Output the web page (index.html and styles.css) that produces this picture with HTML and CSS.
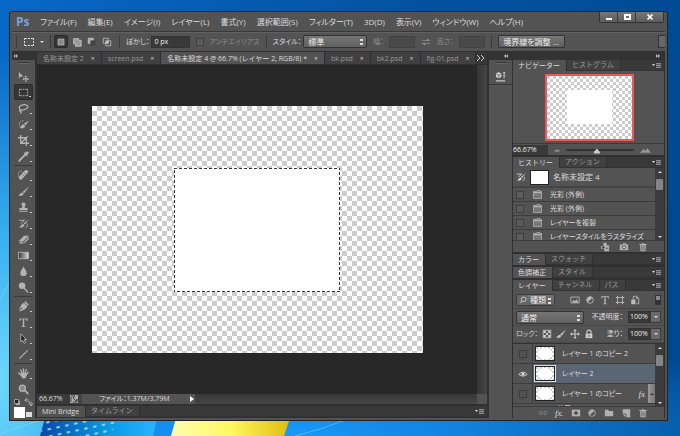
FILE: index.html
```html
<!DOCTYPE html>
<html lang="ja">
<head>
<meta charset="utf-8">
<title>名称未設定 4</title>
<link rel="stylesheet" href="styles.css">
</head>
<body>
<svg class="wallpaper" viewBox="0 0 680 436" preserveAspectRatio="none" aria-hidden="true">
  <defs>
    <linearGradient id="flagBlue" x1="0" x2="1"><stop offset="0" stop-color="#0848a8"/><stop offset=".55" stop-color="#0898e0"/><stop offset="1" stop-color="#28b4ff"/></linearGradient>
    <linearGradient id="flagYellow" x1="0" x2="1"><stop offset="0" stop-color="#fffcb0"/><stop offset=".5" stop-color="#fff860"/><stop offset="1" stop-color="#e0bc10"/></linearGradient>
    <pattern id="dots" width="9" height="7" patternUnits="userSpaceOnUse" patternTransform="rotate(-12)"><ellipse cx="4" cy="3" rx="2" ry="1" fill="#a8dcff"/></pattern>
  </defs>
  <path d="M0 300 10 282M0 434Q20 426 42 420M295 436Q320 430 345 420" stroke="#8ed8ff" fill="none" opacity=".5"/>
  <path d="M45 418H157L153 436H40Z" fill="url(#flagBlue)"/>
  <path d="M45 418H122L108 436H40Z" fill="url(#dots)"/>
  <path d="M176 418H290L284 436H171Z" fill="url(#flagYellow)"/>
</svg>
<svg class="defs" aria-hidden="true">
  <symbol id="move" viewBox="0 0 12 12"><path d="M1 1v7l2-2h3z"/><path d="M8.500 4.500 10 6.500H9v1.500h1.500V7l1.500 1.700-1.500 1.600v-1H9V11h1l-1.500 1L7 11h1V9.300H6.500v1L5 8.700 6.500 7v1H8V6.500H7z"/></symbol>
  <symbol id="marquee" viewBox="0 0 12 12"><path d="M1.500 4V2.500H4M5 2.500h2M8 2.500h2.500V4M10.500 5v2M10.500 8v1.500H8M7 9.500H5M4 9.500H1.500V8M1.500 7V5" fill="none" stroke="currentColor"/></symbol>
  <symbol id="lasso" viewBox="0 0 12 12"><path d="M3 7.500C-.5 5.500 2 2 6.500 1.800 11 1.600 12 4.500 9 6.200 7 7.400 4 7.800 3 7.500c-1.500 0-1.500 2 0 1.800 1 0 .5 1.500-.5 2.200" fill="none" stroke="currentColor" stroke-width="1.300"/></symbol>
  <symbol id="quick" viewBox="0 0 12 12"><path d="M6 2C2 2 0 5 2 8" fill="none" stroke="currentColor" stroke-dasharray="1.500 1"/><path d="M11.800 1.500 8.500 6.800 6.300 5.300zM5.800 5.800 8 7.500C7.500 10 4 10.800 1.500 9.500c2 0 2-3.500 4.300-3.700z"/></symbol>
  <symbol id="crop" viewBox="0 0 12 12"><path d="M3 0v9h9M0 3h9v9M3 9 10.500 1.500" fill="none" stroke="currentColor" stroke-width="1.400"/></symbol>
  <symbol id="dropper" viewBox="0 0 12 12"><path d="M8 4 2.500 9.500 1 11.500" fill="none" stroke="currentColor" stroke-width="2"/><path d="M6 2.500 9.500 6l1-1-.5-1c2-1.500 2-2.500 1.300-3.200S9 .5 8 2L7 1.500z"/></symbol>
  <symbol id="heal" viewBox="0 0 12 12"><ellipse cx="3" cy="5" rx="2.500" ry="4" fill="none" stroke="currentColor" stroke-dasharray="1.500 1"/><path d="M3 8.500 9 2" stroke="currentColor" stroke-width="4" stroke-linecap="round"/><path d="M5 5 7.200 7M7 3l2 2" stroke="#555" stroke-width=".7"/></symbol>
  <symbol id="brush" viewBox="0 0 12 12"><path d="M12 .5 6.800 8 5 6.500zM4.500 7 6.300 8.500C5.500 11 2.500 11 0 10c2 0 2.500-3 4.500-3z"/></symbol>
  <symbol id="stamp" viewBox="0 0 12 12"><path d="M6 .5c2 0 2.500 1.500 2 2.800-.5 1.200-.8 1.800-.5 3.200h3V9h-9V6.500h3c.3-1.400 0-2-.5-3.200C3.500 2 4 .5 6 .5zM1.500 10h9v1h-9z"/></symbol>
  <symbol id="histbrush" viewBox="0 0 12 12"><path d="M11.500 1.500 7.500 7 6 6zM5.500 6.500 7 7.500C6 10.500 3.500 11 1 10c2 0 2.500-3.500 4.500-3.500z"/><path d="M1 2.500h6L3 6M9.500 6c2 2 0 4-1.500 4.500" fill="none" stroke="currentColor"/></symbol>
  <symbol id="eraser" viewBox="0 0 12 12"><path d="M6.500 2H12L6 7.500H1z"/><path d="M1 8h5v2.500H2zM7 7.500 12 3v2.500l-5 5z" opacity=".75"/></symbol>
  <symbol id="gradient" viewBox="0 0 12 12"><linearGradient id="gg"><stop stop-color="#333"/><stop offset="1" stop-color="#ddd"/></linearGradient><path d="M.5 2.500h11v7H.5z" fill="url(#gg)" stroke="currentColor"/></symbol>
  <symbol id="drop" viewBox="0 0 12 12"><path d="M6 .5C7 3 9.500 5 9.500 7.800 9.500 10 8 11 6 11S2.500 10 2.500 7.800C2.500 5 5 3 6 .5z"/></symbol>
  <symbol id="dodge" viewBox="0 0 12 12"><circle cx="4.500" cy="4" r="3.500"/><path d="m6.500 6.500 4.500 5" stroke="currentColor" stroke-width="1.500"/></symbol>
  <symbol id="pen" viewBox="0 0 12 12"><path d="M8 0 12 4 10.500 5 7 1.500zM6.500 2 10 5.500C9.500 8.500 7 9.500 2 11.500L1.500 11 5 7.500l-.7-.7L1 10.300C2.500 6 3.500 3 6.500 2z"/></symbol>
  <symbol id="type" viewBox="0 0 12 12"><path d="M1.500 1.500h9v2.800h-.8C9.500 3 9 2.500 8 2.500H6.800v7c0 .7.400.8 1.400.9v.6H3.800v-.6c1-.1 1.400-.2 1.400-.9v-7H4c-1 0-1.500.5-1.700 1.800h-.8z"/></symbol>
  <symbol id="arrow" viewBox="0 0 12 12"><path d="M3 .8v9l2-2L6.700 11.300l1.600-.8L6.700 7.200h2.800z" fill="#222" stroke="currentColor"/></symbol>
  <symbol id="line" viewBox="0 0 12 12"><path d="M1.500 10.500 10.500 1.500" stroke="currentColor" stroke-width="1.200"/></symbol>
  <symbol id="hand" viewBox="0 0 12 12"><path d="M3.500 8 .8 5.500M4.300 6 3 2M6 5.500V1M7.700 6 9 1.800M9 7.500 11 4.500" stroke="currentColor" stroke-width="1.400" stroke-linecap="round"/><path d="M3 5.500h6.500c0 3-.5 6-3.300 6C4.200 11.500 3.500 9 3 7z"/></symbol>
  <symbol id="zoom" viewBox="0 0 12 12"><circle cx="4.800" cy="4.500" r="3.300" fill="#888" stroke="currentColor" stroke-width="1.400"/><path d="m7.300 7 4 4" stroke="currentColor" stroke-width="1.800"/></symbol>
  <symbol id="swap" viewBox="0 0 12 12"><path d="M1 4h6V1.500l4.500 3.300H1zM11 8H5v2.500L.5 7.200H11z"/></symbol>
  <symbol id="b-new" viewBox="0 0 12 12"><path d="M2.500 2.500h7v7h-7z" fill="#888" stroke="#bbb"/></symbol>
  <symbol id="b-add" viewBox="0 0 12 12"><path d="M2 2h6v2h3v7H4V8H2z" fill="#999" stroke="#ccc"/></symbol>
  <symbol id="b-sub" viewBox="0 0 12 12"><path d="M1.500 1.500h6v2h-4v4h-2z" fill="#999" stroke="#ccc"/><path d="M4.500 4.500h6v6h-6z" fill="#444"/></symbol>
  <symbol id="b-int" viewBox="0 0 12 12"><path d="M1.500 1.500h6v6h-6zM4.500 4.500h6v6h-6z" fill="none" stroke="#bbb"/><path d="M5 5h2.500v2.500H5z" fill="#ddd"/></symbol>
  <symbol id="menu" viewBox="0 0 9 5"><path d="M0 1h3L1.500 3z" fill="#ddd"/><path d="M4 0h5v1H4zM4 2h5v1H4zM4 4h5v1H4z" fill="#888"/><path d="M4 1h5v1H4zM4 3h5v1H4z" fill="#606060"/></symbol>
  <symbol id="state" viewBox="0 0 10 10"><path d="M.5 1.500h4v-1h3v1h2v8h-9z" fill="#777" stroke="#aaa"/><path d="M1 3h8" stroke="#ccc"/></symbol>
  <symbol id="newdoc" viewBox="0 0 12 12"><path d="M4 1h4v3h3v7H5V8H1V5h3zM8 1l3 3"/><path d="M2 6.500h4M4 4.500v4M7 7.500h3" stroke="#444"/></symbol>
  <symbol id="camera" viewBox="0 0 12 12"><path d="M1 3h3l1-1.500h3L9 3h2v7H1z"/><circle cx="6" cy="6.300" r="2" fill="#ccc" stroke="#444"/></symbol>
  <symbol id="trash" viewBox="0 0 12 12"><path d="M1.500 2.500h3v-1h3v1h3v1h-9zM2.500 4h7L9 11H3z"/><path d="M4.500 5v5M6 5v5M7.500 5v5" stroke="#555" stroke-width=".7"/></symbol>
  <symbol id="picture" viewBox="0 0 12 12"><path d="M1 2.500h10v7H1z" fill="none" stroke="currentColor"/><path d="m2 9 2.500-3L6 7.500 8 5l2 4z"/></symbol>
  <symbol id="adjust" viewBox="0 0 12 12"><circle cx="6" cy="6" r="4" fill="none" stroke="currentColor"/><path d="M3.200 8.800A4 4 0 0 1 8.800 3.200z"/></symbol>
  <symbol id="shape" viewBox="0 0 12 12"><path d="M3 1v10M9 1v10M1 3h10M1 9h10" stroke="currentColor"/><path d="M2 2h2v2H2zM8 2h2v2H8zM2 8h2v2H2zM8 8h2v2H8z"/></symbol>
  <symbol id="smart" viewBox="0 0 12 12"><path d="M4 1.500h4l2.500 2.500v6.500H7M4 1.500V5" fill="none" stroke="currentColor"/><path d="M1.500 5.500h5v5.500h-5zM7.500 1.500v3h3z"/></symbol>
  <symbol id="checks" viewBox="0 0 12 12"><path d="M1.500 1.500h9v9h-9z" fill="none" stroke="currentColor"/><path d="M2 2h2.700v2.700H2zM7.300 2H10v2.700H7.300zM4.700 4.700h2.600v2.600H4.700zM2 7.300h2.700V10H2zM7.300 7.300H10V10H7.300z"/></symbol>
  <symbol id="cross" viewBox="0 0 12 12"><path d="m6 0 2 2.500H6.600v2.900h2.900V4L12 6 9.500 8V6.600H6.600v2.900H8L6 12 4 9.500h1.400V6.600H2.500V8L0 6l2.500-2v1.400h2.900V2.500H4z"/></symbol>
  <symbol id="lock" viewBox="0 0 12 12"><path d="M3.500 6V4C3.500.5 8.500.5 8.500 4v2" fill="none" stroke="currentColor" stroke-width="1.300"/><path d="M2 5.500h8V11H2z"/><path d="M6 7v2.500" stroke="#444"/></symbol>
  <symbol id="search" viewBox="0 0 12 12"><circle cx="7" cy="5" r="3.500" fill="none" stroke="currentColor" stroke-width="1.200"/><path d="M4.500 7.500 1.500 11" stroke="currentColor" stroke-width="1.200"/></symbol>
  <symbol id="eye" viewBox="0 0 12 12"><path d="M1 6.500Q6 1 11 6.500 6 10.500 1 6.500z" fill="none" stroke="currentColor"/><circle cx="6" cy="6.200" r="1.700"/></symbol>
  <symbol id="link" viewBox="0 0 12 12"><path d="M5 4H3.500a2 2 0 0 0 0 4H5M7 4h1.500a2 2 0 0 1 0 4H7M3.500 6h5" fill="none" stroke="currentColor"/></symbol>
  <symbol id="mask" viewBox="0 0 12 12"><path d="M1 2h10v8H1z"/><circle cx="6" cy="6" r="2.200" fill="#444"/></symbol>
  <symbol id="folder" viewBox="0 0 12 12"><path d="M1 2h4l1 1.500h5V10H1z"/></symbol>
  <symbol id="newlayer" viewBox="0 0 12 12"><path d="M2 1.500h9V11H6.500V6.500H2z"/><path d="M2 7.500h3.500V11z"/></symbol>
  <symbol id="props" viewBox="0 0 12 12"><path d="M1 3 4 1l3 2v3.500L4 8 1 6.500zM9 1h2v2H9zM9 4h2v2H9zM9 7h2v1H9zM1 10h10v1.500H1z"/><path d="M2 3.500 4 4.700 6 3.500M4 4.500V7" stroke="#555" fill="none" stroke-width=".8"/></symbol>
  <symbol id="peaks" viewBox="0 0 12 6"><path d="m0 6 4-4 2 2 2-3 4 5z" fill="#999"/></symbol>
</svg>

<div class="window">
  <header class="menubar">
    <span class="logo">Ps</span>
    <nav class="menus">
      <a href="#">ファイル(F)</a><a href="#">編集(E)</a><a href="#">イメージ(I)</a><a href="#">レイヤー(L)</a><a href="#">書式(Y)</a><a href="#">選択範囲(S)</a><a href="#">フィルター(T)</a><a href="#">3D(D)</a><a href="#">表示(V)</a><a href="#">ウィンドウ(W)</a><a href="#">ヘルプ(H)</a>
    </nav>
    <div class="caption">
      <button aria-label="最小化"><svg viewBox="0 0 8 8"><path d="M1 5h6v2H1z"/></svg></button>
      <button aria-label="最大化"><svg viewBox="0 0 8 8"><path d="M1 1h7v6H1zM3 3v2h3V3z" fill-rule="evenodd"/></svg></button>
      <button class="close" aria-label="閉じる"><svg viewBox="0 0 8 8"><path d="m1.500 1.500 5 5m0-5-5 5" stroke="currentColor" stroke-width="1.700"/></svg></button>
    </div>
  </header>

  <div class="options">
    <i class="rule"></i>
    <button class="preset" aria-label="ツールプリセット"><svg><use href="#marquee"/></svg><i class="caret"></i></button>
    <i class="rule"></i>
    <div class="modes">
      <button class="on" aria-label="新規選択"><svg><use href="#b-new"/></svg></button>
      <button aria-label="追加"><svg><use href="#b-add"/></svg></button>
      <button aria-label="削除"><svg><use href="#b-sub"/></svg></button>
      <button aria-label="共通範囲"><svg><use href="#b-int"/></svg></button>
    </div>
    <i class="rule"></i>
    <label class="field">ぼかし：<input type="text" value="0 px"></label>
    <label class="field dim"><input type="checkbox" disabled>アンチエイリアス</label>
    <i class="rule"></i>
    <label class="field">スタイル：<select class="drop"><option>標準</option></select></label>
    <label class="field dim">幅：<input class="short" type="text" disabled></label>
    <svg class="dim"><use href="#swap"/></svg>
    <label class="field dim">高さ：<input class="short" type="text" disabled></label>
    <i class="rule"></i>
    <button class="refine">境界線を調整 ...</button>
    <button class="more" aria-label="ワークスペース"></button>
  </div>

  <div class="workspace">
    <aside class="tools">
      <div class="dockhead"><b class="chev right"></b></div>
      <i class="grip"></i>
      <button class="plain" aria-label="移動"><svg><use href="#move"/></svg></button>
      <button class="on" aria-label="長方形選択"><svg><use href="#marquee"/></svg></button>
      <button aria-label="なげなわ"><svg><use href="#lasso"/></svg></button>
      <button aria-label="クイック選択"><svg><use href="#quick"/></svg></button>
      <button aria-label="切り抜き"><svg><use href="#crop"/></svg></button>
      <button aria-label="スポイト"><svg><use href="#dropper"/></svg></button>
      <hr>
      <button aria-label="修復ブラシ"><svg><use href="#heal"/></svg></button>
      <button aria-label="ブラシ"><svg><use href="#brush"/></svg></button>
      <button aria-label="スタンプ"><svg><use href="#stamp"/></svg></button>
      <button aria-label="ヒストリーブラシ"><svg><use href="#histbrush"/></svg></button>
      <button aria-label="消しゴム"><svg><use href="#eraser"/></svg></button>
      <button aria-label="グラデーション"><svg><use href="#gradient"/></svg></button>
      <button aria-label="ぼかし"><svg><use href="#drop"/></svg></button>
      <button aria-label="覆い焼き"><svg><use href="#dodge"/></svg></button>
      <hr>
      <button aria-label="ペン"><svg><use href="#pen"/></svg></button>
      <button aria-label="文字"><svg><use href="#type"/></svg></button>
      <button aria-label="パス選択"><svg><use href="#arrow"/></svg></button>
      <button aria-label="ライン"><svg><use href="#line"/></svg></button>
      <hr>
      <button aria-label="手のひら"><svg><use href="#hand"/></svg></button>
      <button class="plain" aria-label="ズーム"><svg><use href="#zoom"/></svg></button>
      <svg class="swatches" viewBox="0 0 21 21" aria-hidden="true"><path d="M3 4h4v4H3z" fill="#aaa"/><path d="M1.500 2.500h4v4h-4z" fill="#222" stroke="#999"/><path d="M12 4V3h4M14 1l-2 2 2 2M15 5h3v3M16 6l2 3 2-3" fill="none" stroke="#aaa"/><path d="M13 15h6v5h-6z" fill="#ddd"/><path d="M1 10h11v11H1z" fill="#fff"/></svg>
    </aside>

    <main class="document">
      <div class="doctabs">
        <button>名称未設定 2<b>×</b></button>
        <button>screen.psd<b>×</b></button>
        <button class="on">名称未設定 4 @ 66.7% (レイヤー 2, RGB/8) *<b>×</b></button>
        <button>bk.psd<b>×</b></button>
        <button>bk2.psd<b>×</b></button>
        <button>fig-01.psd<b>×</b></button>
        <svg class="overflow" viewBox="0 0 9 8"><path d="m1 1 3 3-3 3M5 1l3 3-3 3" fill="none" stroke="#ccc"/></svg>
      </div>
      <div class="stage">
        <div class="canvas"><div class="art"><svg class="ants"><rect class="base" width="100%" height="100%"/><rect class="dash" width="100%" height="100%"/></svg></div></div>
        <div class="vscroll"></div>
      </div>
      <div class="status">
        <span class="pct">66.67%</span>
        <svg class="export" viewBox="0 0 8 8"><path d="M0 0h8v8H0z" fill="#aaa"/><path d="M1 1h4L3 3l3 3 1-2v3H3M1 2v5" fill="none" stroke="#444"/></svg>
        <span class="info">ファイル：1.37M/3.79M</span>
        <button aria-label="情報"><svg viewBox="0 0 6 8"><path d="m1 1 4 3-4 3z"/></svg></button>
        <i class="track"></i><i class="corner"></i>
      </div>
      <div class="tabs bottom"><button class="on">Mini Bridge</button><button>タイムライン</button><svg class="menu"><use href="#menu"/></svg></div>
    </main>

    <aside class="strip">
      <div class="dockhead"><b class="chev"></b></div>
      <i class="grip"></i>
      <button aria-label="属性"><svg><use href="#props"/></svg></button>
    </aside>

    <aside class="panels">
      <div class="dockhead"><b class="chev right"></b></div>
      <section>
        <div class="tabs"><button class="on">ナビゲーター</button><button>ヒストグラム</button><svg class="menu"><use href="#menu"/></svg></div>
        <div class="navview"><div class="navthumb"><div></div></div></div>
        <div class="navzoom"><span>66.67%</span><svg class="small"><use href="#peaks"/></svg><input type="range" aria-label="ズーム" value="45"><svg><use href="#peaks"/></svg></div>
      </section>
      <section>
        <div class="tabs"><button class="on">ヒストリー</button><button>アクション</button><svg class="menu"><use href="#menu"/></svg></div>
        <div class="list history">
          <div class="rows">
            <div class="snap"><svg><use href="#histbrush"/></svg><i></i>名称未設定 4</div>
            <div class="step"><input type="checkbox" aria-label="光彩"><svg><use href="#state"/></svg>光彩 (外側)</div>
            <div class="step"><input type="checkbox" aria-label="光彩"><svg><use href="#state"/></svg>光彩 (外側)</div>
            <div class="step"><input type="checkbox" aria-label="複製"><svg><use href="#state"/></svg>レイヤーを複製</div>
            <div class="step"><input type="checkbox" aria-label="ラスタライズ"><svg><use href="#state"/></svg>レイヤースタイルをラスタライズ</div>
          </div>
          <div class="scroll"><i></i></div>
        </div>
        <div class="foot right"><svg><use href="#newdoc"/></svg><svg><use href="#camera"/></svg><svg><use href="#trash"/></svg></div>
      </section>
      <section><div class="tabs"><button class="on">カラー</button><button>スウォッチ</button><svg class="menu"><use href="#menu"/></svg></div></section>
      <section><div class="tabs"><button class="on">色調補正</button><button>スタイル</button><svg class="menu"><use href="#menu"/></svg></div></section>
      <section class="layers">
        <div class="tabs"><button class="on">レイヤー</button><button>チャンネル</button><button>パス</button><svg class="menu"><use href="#menu"/></svg></div>
        <div class="ctl filter">
          <div class="kind"><svg><use href="#search"/></svg><select class="drop" aria-label="フィルターの種類"><option>種類</option></select></div>
          <div class="icons"><svg><use href="#picture"/></svg><svg><use href="#adjust"/></svg><svg><use href="#type"/></svg><svg><use href="#shape"/></svg><svg><use href="#smart"/></svg></div>
          <i class="switch"></i>
        </div>
        <div class="ctl">
          <select class="drop blend" aria-label="描画モード"><option>通常</option></select>
          <label class="field amount">不透明度：<input type="text" value="100%"></label><button class="dd" aria-label="不透明度"><i class="caret"></i></button>
        </div>
        <div class="ctl">
          <span class="locks">ロック：<svg><use href="#checks"/></svg><svg><use href="#brush"/></svg><svg><use href="#cross"/></svg><svg><use href="#lock"/></svg></span>
          <label class="field amount">塗り：<input type="text" value="100%"></label><button class="dd" aria-label="塗り"><i class="caret"></i></button>
        </div>
        <div class="list grow">
          <div class="rows">
            <div class="layer"><span class="vis"><i class="box"></i></span><i class="thumb"></i>レイヤー 1 のコピー 2</div>
            <div class="layer on"><span class="vis"><svg><use href="#eye"/></svg></span><i class="thumb"></i>レイヤー 2</div>
            <div class="layer"><span class="vis"><i class="box"></i></span><i class="thumb"></i>レイヤー 1 のコピー<em>fx</em><button class="fold" aria-label="効果"><i class="up"></i></button></div>
            <div class="effect">効果</div>
          </div>
          <div class="scroll"><i></i></div>
        </div>
        <div class="foot"><svg class="faded"><use href="#link"/></svg><em>fx.</em><svg><use href="#mask"/></svg><svg><use href="#adjust"/></svg><svg><use href="#folder"/></svg><svg><use href="#newlayer"/></svg><svg><use href="#trash"/></svg></div>
      </section>
    </aside>
  </div>
</div>
</body>
</html>
```
FILE: styles.css
```css
* { box-sizing: border-box; }
body {
  margin: 0;
  min-height: 100vh;
  display: flex;
  padding: 11px 12px 15px 9px;
  background:
    radial-gradient(ellipse 160px 330px at 0 88%, #6ed8fa, #38b0f0 45%, transparent),
    radial-gradient(ellipse 560px 110px at 40% 100%, #189cff, transparent),
    linear-gradient(100deg, #0868c8, #0454a4 50%, #004890);
  color: #ddd;
  font: 8px/12px "Open Sans", "Noto Sans CJK JP", sans-serif;
  font-feature-settings: "palt";
}
button, input, select { font: inherit; font-feature-settings: inherit; color: inherit; margin: 0; padding: 0; border: 0; background: none; appearance: none; border-radius: 0; }
button { display: flex; align-items: center; justify-content: center; white-space: nowrap; }
a { color: inherit; text-decoration: none; }
i { display: block; flex: none; }
svg { width: 10px; height: 10px; fill: currentColor; flex: none; display: block; }
.wallpaper { position: absolute; inset: 0; width: 100%; height: 100%; z-index: -1; }
.defs { position: absolute; width: 0; height: 0; }

.window {
  flex: 1;
  min-width: 0;
  display: flex;
  flex-direction: column;
  background: #535353;
  border: 1px solid #222;
  border-radius: 3px 3px 0 0;
  padding: 0 2px 2px;
}
.menubar { display: flex; height: 19px; align-items: center; white-space: nowrap; }
.logo { width: 24px; margin-left: 4px; font: bold 12px/18px "Open Sans", sans-serif; color: #78a4d6; }
.menus { display: flex; gap: 11px; flex: 1; }
.caption { display: flex; align-self: flex-start; margin-right: 1px; border: 1px solid #333; border-top: 0; border-radius: 0 0 3px 3px; }
.caption button { width: 18px; height: 10px; background: linear-gradient(#777, #5c5c5c); border-right: 1px solid #3a3a3a; color: #fff; }
.caption .close { width: 27px; border-right: 0; }
.caption svg { width: 8px; height: 8px; }

.options { display: flex; align-items: center; gap: 6px; height: 20px; border-top: 1px solid #383838; box-shadow: inset 0 1px #626262; white-space: nowrap; padding-left: 4px; }
.rule { width: 1px; height: 13px; background: #3c3c3c; }
.caret { border: 2px solid transparent; border-top-color: #ddd; border-bottom: 0; }
.preset { gap: 5px; }
.preset svg { width: 12px; height: 12px; }
.modes { display: flex; gap: 3px; margin-left: -3px; }
.modes button { width: 12px; height: 13px; }
.modes .on { width: 14px; background: #363636; border: 1px solid #2a2a2a; border-radius: 2px; }
.field { display: flex; align-items: center; gap: 2px; font-size: 7px; }
.field input[type=text] { width: 39px; height: 12px; padding-left: 2px; background: #393939; border: 1px solid #333; color: #eee; }
.field input.short { width: 26px; background: #4a4a4a; border-color: #424242; }
.dim { color: #8d8d8d; }
input[type=checkbox] { width: 8px; height: 8px; border: 1px solid #3f3f3f; background: #5c5c5c; flex: none; }
.field.dim { gap: 5px; }
.drop {
  height: 13px;
  width: 64px;
  padding: 0 4px;
  color: #eee;
  font-size: 8px;
  line-height: 11px;
  border: 1px solid #333;
  border-radius: 2px;
  background: linear-gradient(#ddd, #ddd) right 3px top 3px / 3px 2px no-repeat,
    linear-gradient(#ddd, #ddd) right 3px top 7px / 3px 2px no-repeat,
    linear-gradient(#747474, #616161);
}
.refine { width: 67px; height: 13px; color: #eee; border: 1px solid #333; border-radius: 2px; background: linear-gradient(#777, #606060); }
.more { margin-left: auto; width: 7px; height: 13px; border: 1px solid #333; border-right: 0; background: #686868; }

.workspace { flex: 1; display: flex; background: #303030; border-top: 1px solid #303030; min-height: 0; }
.dockhead { height: 8px; background: #333; display: flex; justify-content: flex-end; align-items: center; padding-right: 6px; }
.chev, .chev::before { display: block; width: 0; height: 0; border: 2px solid transparent; border-right-color: #bbb; border-left: 0; content: ""; }
.chev { position: relative; }
.chev::before { position: absolute; left: 2px; top: -2px; }
.chev.right, .chev.right::before { border: 2px solid transparent; border-left-color: #bbb; border-right: 0; }
.chev.right::before { left: 0; }
.grip { width: 12px; height: 2px; background: #383838; margin: 2px auto 4px; border-bottom: 1px solid #666; }

.tools { width: 23px; background: #535353; margin-right: 2px; }
.tools .dockhead { justify-content: flex-start; padding-left: 2px; }
.tools button { width: 19px; height: 16px; margin: 0 auto; color: #b4b4b4; border-radius: 2px; background: linear-gradient(#ccc, #ccc) right 1px bottom 2px / 2px 1px no-repeat; }
.tools button.plain { background: none; }
.tools button.on { background-color: #363636; border: 1px solid #2c2c2c; }
.tools hr { height: 1px; margin: 1px 2px; border: 0; background: #3a3a3a; }
.tools svg { width: 11px; height: 11px; }
.tools .swatches { width: 21px; height: 21px; margin-left: 1px; }

.document { flex: 1; min-width: 0; display: flex; flex-direction: column; margin-right: 2px; }
.doctabs { display: flex; height: 12px; background: #383838; margin-bottom: 1px; font-size: 7px; font-feature-settings: normal; }
.doctabs button { padding: 0 6px; gap: 7px; color: #999; background: #404040; border-right: 1px solid #2f2f2f; line-height: 11px; }
.doctabs .on { background: #535353; color: #ddd; }
.doctabs b { font-weight: 400; color: #ccc; }
.overflow { width: 9px; height: 8px; margin: 2px 2px 0 auto; }
.stage { flex: 1; display: flex; min-height: 0; }
.canvas { flex: 1; background: #282828; display: grid; place-items: center; }
.art { width: 331px; height: 247px; display: grid; place-items: center; background: repeating-conic-gradient(#fff 0 25%, #ccc 0 50%) 5px 0 / 10px 10px; }
.ants { width: 166px; height: 124px; background: #fff; }
.ants rect { fill: none; stroke-width: 2; }
.ants .base { stroke: #fff; }
.ants .dash { stroke: #333; stroke-dasharray: 3 2; }
.vscroll { width: 10px; background: linear-gradient(90deg, #363636, #454545); }
.status { display: flex; height: 10px; background: #434343; align-items: center; font-size: 7px; line-height: 10px; white-space: nowrap; }
.pct { width: 33px; padding-left: 2px; background: #3a3a3a; }
.export { width: 8px; height: 8px; margin-right: 4px; }
.info { width: 106px; background: #535353; padding-left: 17px; }
.status button { width: 7px; height: 10px; background: #555; color: #fff; }
.status button svg { width: 6px; height: 8px; }
.track { flex: 1; height: 10px; background: linear-gradient(#383838, #474747); }
.corner { width: 10px; height: 10px; background: #535353; }

.tabs { display: flex; height: 11px; background: #393939; font-size: 7px; line-height: 10px; border-bottom: 1px solid #333; }
.tabs button { padding: 0 6px 0 5px; color: #999; background: #404040; border-right: 1px solid #303030; }
.tabs .on { background: #535353; color: #ddd; height: 11px; }
.menu { width: 9px; height: 5px; margin: 3px 3px 0 auto; }
.bottom { margin: 2px 0 1px; }

.strip { width: 23px; background: #535353; margin-right: 1px; }
.strip button { width: 23px; height: 17px; color: #ccc; border-bottom: 1px solid #383838; }
.strip svg { width: 11px; height: 11px; }

.panels { width: 151px; display: flex; flex-direction: column; margin-right: 1px; }
.panels section { background: #535353; margin-bottom: 2px; }
.panels .tabs, .bottom { font-feature-settings: normal; }
.navview { display: grid; place-items: center; height: 73px; padding-left: 2px; border-bottom: 1px solid #3c3c3c; }
.navthumb { width: 89px; height: 67px; border: 2px solid #ec5858; display: grid; place-items: center; background: repeating-conic-gradient(#fff 0 25%, #ccc 0 50%) 0 0 / 6px 6px; }
.navthumb div { width: 45px; height: 34px; background: #fff; }
.navzoom { display: flex; align-items: center; gap: 6px; height: 11px; font-size: 7px; line-height: 10px; }
.navzoom span { width: 35px; background: #3a3a3a; color: #eee; }
.navzoom svg { width: 11px; height: 6px; }
.navzoom svg.small { width: 6px; height: 4px; }
input[type=range] { width: 68px; height: 8px; }
input[type=range]::-webkit-slider-runnable-track { height: 2px; background: #333; }
input[type=range]::-webkit-slider-thumb { appearance: none; width: 6px; height: 5px; background: #ccc; clip-path: polygon(50% 0, 100% 70%, 100% 100%, 0 100%, 0 70%); }

.list { display: flex; overflow: hidden; }
.rows { flex: 1; min-width: 0; overflow: hidden; white-space: nowrap; }
.history { height: 72px; }
.snap { display: flex; align-items: center; height: 20px; gap: 4px; padding-left: 3px; border-bottom: 2px solid #444; }
.snap i { width: 19px; height: 15px; background: #fff; border: 1px solid #222; }
.step { display: flex; align-items: center; height: 14px; padding-left: 3px; border-bottom: 1px solid #3c3c3c; font-size: 7px; }
.step svg { width: 9px; height: 9px; margin: 0 8px 0 9px; color: #aaa; }
.scroll { width: 9px; background: #3c3c3c; display: flex; flex-direction: column; justify-content: space-between; align-items: center; padding: 3px 0 2px; }
.scroll::before, .scroll::after { content: ""; border: 2px solid transparent; border-bottom-color: #ddd; border-top: 0; }
.scroll::after { border: 2px solid transparent; border-top-color: #ddd; border-bottom: 0; }
.scroll i { width: 7px; height: 11px; margin: 6px 0 auto; background: #858585; border-radius: 1px; }
.foot { display: flex; align-items: center; justify-content: space-between; height: 12px; padding: 0 16px 0 25px; border-top: 1px solid #3c3c3c; color: #b0b0b0; }
.foot.right { justify-content: flex-end; gap: 9px; }
.foot em, .layer em { font: italic 9px/10px "Liberation Serif", serif; color: #ddd; }
.faded { opacity: .5; }

.panels .layers { flex: 1; display: flex; flex-direction: column; min-height: 0; margin-bottom: 0; }
.ctl { display: flex; align-items: center; justify-content: space-between; height: 17px; padding: 0 3px; border-bottom: 1px solid #484848; white-space: nowrap; }
.ctl.filter { height: 18px; }
.kind { display: flex; align-items: center; border: 1px solid #3c3c3c; border-radius: 2px; background: #666; width: 39px; height: 12px; }
.kind svg { width: 8px; height: 8px; margin-left: 2px; }
.kind .drop { width: 28px; height: 10px; line-height: 10px; border: 0; padding: 0 3px; }
.icons { display: flex; gap: 5px; color: #bbb; }
.switch { width: 6px; height: 10px; background: linear-gradient(#888 50%, #333 50%); border: 1px solid #333; }
.blend { width: 68px; }
.amount { margin-left: auto; gap: 5px; }
.field.amount input[type=text] { width: 22px; padding: 0 1px; }
.dd { width: 11px; height: 12px; background: #6a6a6a; border: 1px solid #3a3a3a; }
.locks { display: flex; align-items: center; gap: 4px; color: #ccc; font-size: 7px; }
.grow { flex: 1; min-height: 0; border-top: 1px solid #333; }
.grow .rows { flex-basis: 0; height: 0; min-height: 100%; }
.layer { display: flex; align-items: center; height: 20px; border-bottom: 1px solid #3c3c3c; font-size: 7px; }
.layer.on { background: #5b6573; }
.vis { width: 20px; align-self: stretch; display: grid; place-items: center; background: #535353; border-right: 1px solid #3c3c3c; }
.box { width: 8px; height: 8px; border: 1px solid #3c3c3c; }
.thumb { width: 20px; height: 15px; margin: 0 7px 0 2px; border: 1px solid #222; background: radial-gradient(ellipse 8px 6px, #fff 85%, transparent), repeating-conic-gradient(#fff 0 25%, #ccc 0 50%) 0 0 / 4px 4px; }
.on .thumb { outline: 1px solid #ddd; }
.layer em { margin-left: auto; }
.fold { width: 7px; align-self: stretch; margin-left: 3px; background: linear-gradient(90deg, #999, #777); }
.up { border: 2px solid transparent; border-bottom-color: #333; border-top: 0; }
.effect { padding-left: 44px; font-size: 7px; line-height: 10px; }
```
